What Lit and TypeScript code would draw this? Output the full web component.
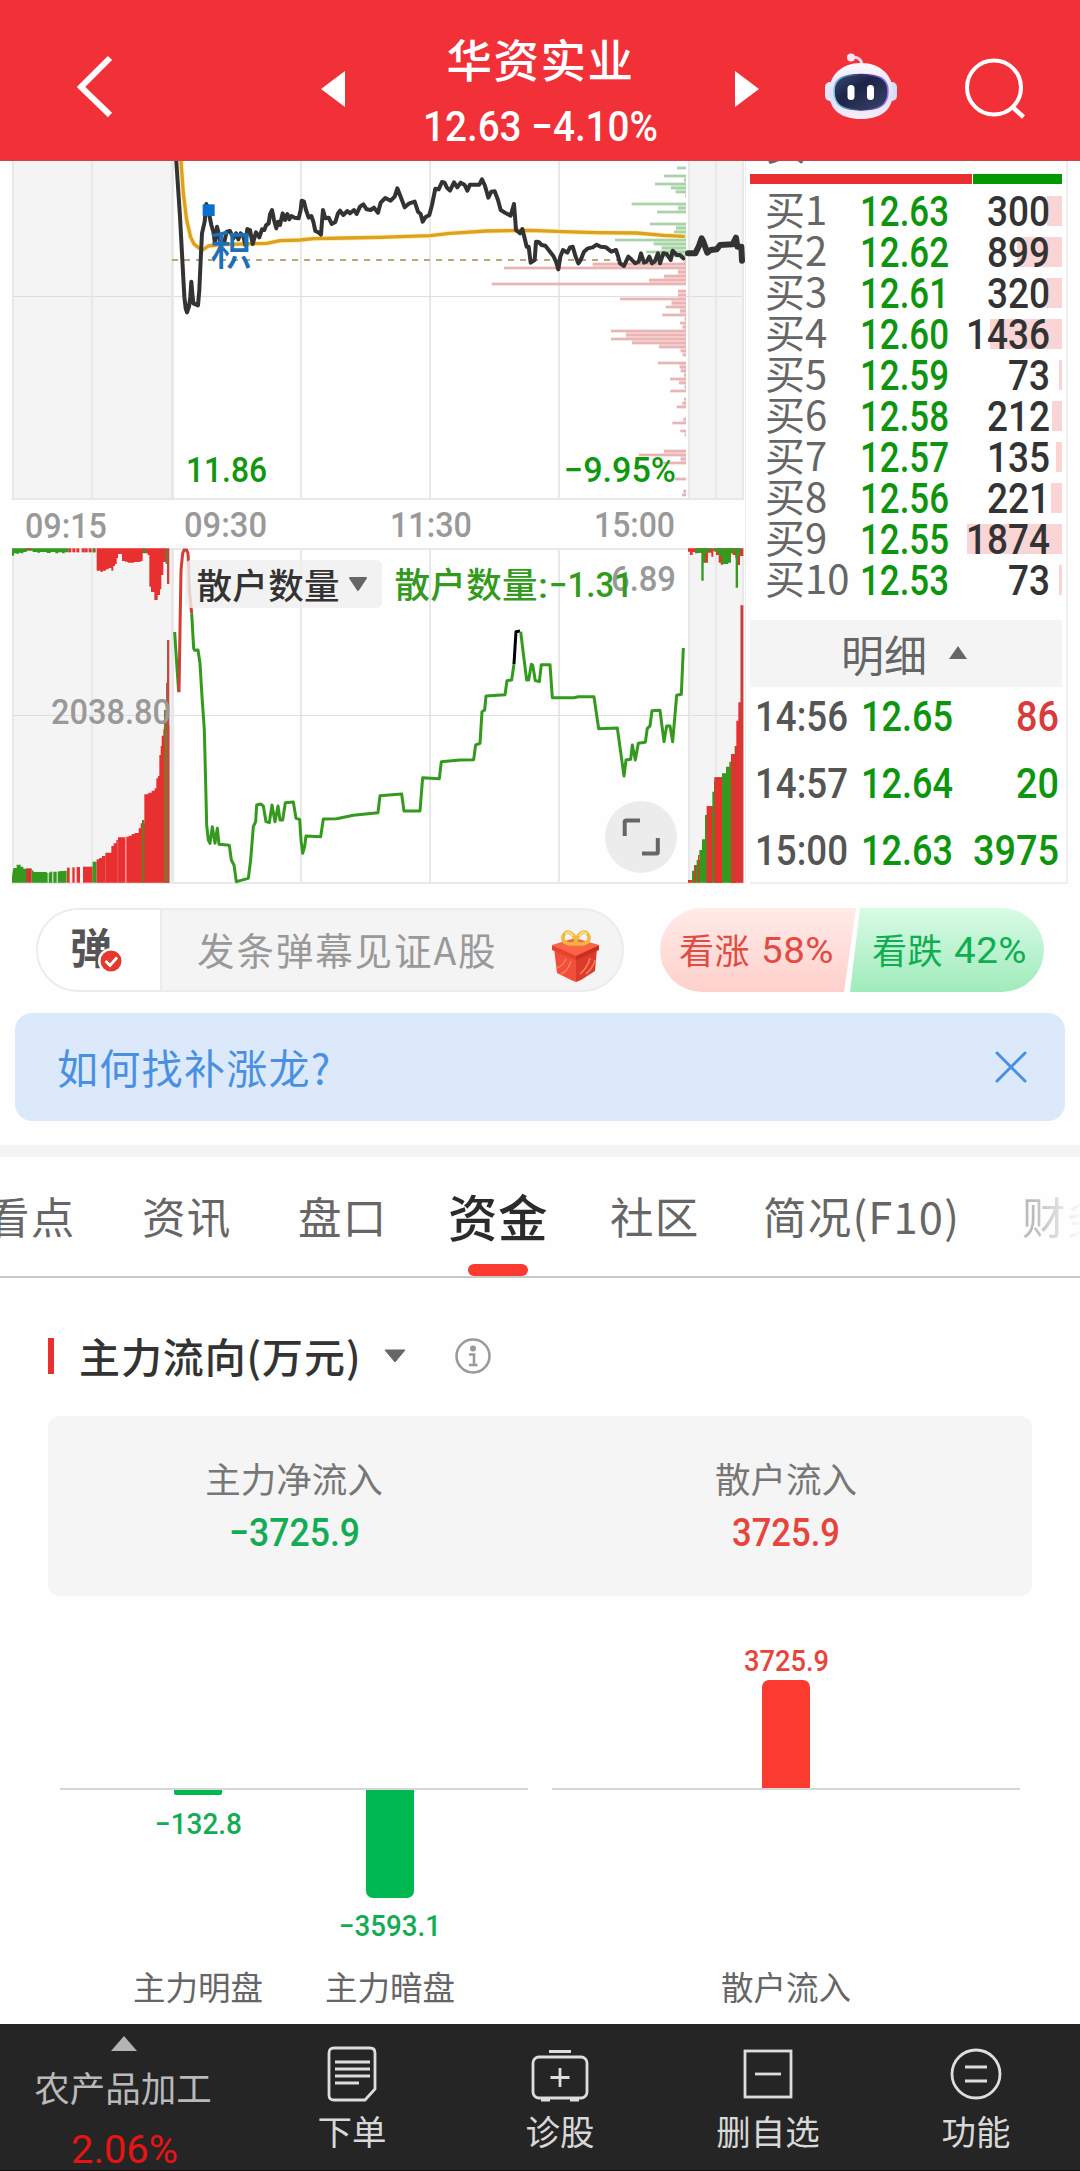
import { LitElement, html, svg, css } from "lit";
import { customElement } from "lit/decorators.js";

const CAP = 0.711;

/** Condensed numerals: the box is exactly as tall as the digits. */
const num = (text: string, w: number, cap: number, cls = "") => html`
  <svg class="num ${cls}" width=${w} height=${cap}>
    <text x="0" y=${cap} font-size=${cap / CAP} textLength=${w} lengthAdjust="spacingAndGlyphs">${text}</text>
  </svg>`;

/** Same numerals inside a chart. */
const label = (text: string, x: number, y: number, w: number, cap: number, fill: string) => svg`
  <text class="din" x=${x} y=${y} fill=${fill} font-size=${cap / CAP} textLength=${w}
    lengthAdjust="spacingAndGlyphs">${text}</text>`;

const bids: [string, string, number][] = [
  ["12.63", "300", 15], ["12.62", "899", 45], ["12.61", "320", 16], ["12.60", "1436", 72],
  ["12.59", "73", 3], ["12.58", "212", 10], ["12.57", "135", 6], ["12.56", "221", 11],
  ["12.55", "1874", 95], ["12.53", "73", 3],
];

const ticks: [string, string, string, string][] = [
  ["14:56", "12.65", "86", "r"], ["14:57", "12.64", "20", "g"], ["15:00", "12.63", "3975", "g"],
];

/* Price line, in thirds of a pixel. */
const price =
  "528,20 540,200 547,330 553,440 557,475 561,487 567,470 571,440 574,395 577,430 580,460 594,466 598,420 602,330 606,250 614,215 619,162 628,195 634,225 640,245 645,280 651,230 656,250 662,282 672,280 680,245 690,243 700,265 708,250 715,268 722,250 730,258 736,285 742,237 750,240 758,282 768,247 778,262 786,238 793,240 798,226 806,220 810,193 816,180 822,210 829,235 834,215 840,225 848,190 855,210 862,192 868,208 874,198 884,203 896,205 902,180 905,152 912,155 918,180 926,203 934,198 940,215 946,243 955,247 963,254 966,215 969,180 976,205 986,203 995,222 1006,216 1014,190 1020,182 1030,195 1042,183 1050,190 1062,180 1070,192 1080,170 1090,163 1100,178 1112,180 1122,173 1134,188 1142,158 1156,144 1172,152 1184,140 1192,115 1202,140 1214,172 1228,160 1244,155 1254,185 1262,192 1268,215 1276,202 1288,195 1296,165 1306,116 1316,118 1326,96 1334,98 1340,112 1350,122 1362,97 1372,112 1382,98 1394,105 1402,122 1410,104 1438,104 1446,88 1454,105 1460,125 1465,143 1474,125 1484,124 1494,150 1502,180 1518,190 1532,197 1542,162 1545,200 1548,240 1560,250 1567,237 1574,265 1580,290 1586,290 1592,338 1604,330 1608,275 1616,276 1625,285 1636,287 1650,305 1660,318 1668,335 1675,358 1681,320 1689,300 1702,308 1710,292 1718,290 1727,320 1735,340 1742,330 1752,305 1764,295 1778,292 1790,284 1802,290 1818,292 1834,305 1848,300 1854,318 1860,340 1872,348 1878,335 1885,320 1894,328 1906,340 1916,335 1923,310 1932,338 1940,335 1948,320 1956,340 1964,335 1974,310 1980,340 1990,310 2000,312 2012,330 2018,302 2030,315 2040,315 2050,325";
const after =
  "2064,310 2086,310 2096,290 2105,265 2110,275 2122,308 2132,300 2150,298 2160,285 2198,283 2208,263 2212,290 2224,290 2226,332";
const average =
  "542,20 550,130 560,210 572,262 582,282 594,292 608,300 625,288 660,284 800,280 840,272 900,270 940,266 1040,264 1140,262 1200,260 1290,257 1350,250 1460,243 1590,241 1690,245 1790,248 1910,249 1990,256 2050,259";

const supply: [number, number][] = [
  [54, 921], [78, 882], [90, 942], [102, 855], [114, 903], [126, 917], [138, 945], [162, 785], [174, 924],
  [186, 861], [222, 840], [234, 918], [246, 912], [258, 920], [270, 735], [282, 851], [294, 875],
  [306, 829], [318, 870],
];
const demand: [number, number][] = [
  [330, 940], [342, 668], [354, 402], [366, 924], [378, 882], [390, 837], [402, 365], [423, 924], [435, 924],
  [447, 750], [459, 905], [471, 887], [483, 930], [495, 877], [507, 944], [519, 930], [531, 938],
  [543, 723], [555, 768], [567, 723], [579, 786], [591, 867], [603, 932], [615, 938], [639, 864],
  [651, 929], [663, 932], [675, 942], [687, 900], [699, 927], [711, 944], [723, 901], [747, 942],
  [759, 937], [771, 920], [807, 940], [819, 907], [843, 931], [855, 944], [903, 882], [915, 807],
  [927, 932], [939, 880], [987, 915], [1023, 940], [1035, 936],
];
const profile = (rows: [number, number][], pale: string, fill: string) => rows.map(([y, x], i) => {
  const next = rows[i + 1];
  const gap = next && next[0] - y <= 12 ? Math.max(x, next[1]) : 948;
  return svg`
    <rect x=${gap} y=${y} width=${948 - gap} height="12" fill=${pale}></rect>
    <rect x=${x} y=${y - 4} width=${948 - x} height="8" fill=${fill}></rect>`;
});

const retailDown =
  "575,250 581,355 584,361 594,360 600,400 606,500 613,600 617,760 620,885 625,930 630,940 637,890 645,940 652,895 657,943 688,946 694,990 702,1005 709,1055 745,1045 752,990 760,890 767,875 770,825 782,822 790,828 798,875 808,878 816,825 825,875 834,828 840,870 848,870 856,818 880,816 888,865 899,868 903,930 908,970 914,950 918,918 962,920 970,867 1010,866 1060,856 1134,848 1140,797 1205,792 1212,843 1260,843 1268,743 1318,746 1324,695 1380,690 1421,689 1427,645 1440,640 1446,545 1454,540 1458,498 1515,494 1521,452 1535,450 1542,402";
const retailTail =
  "1562,305 1570,370 1580,450 1586,450 1594,403 1598,405 1606,452 1618,455 1624,404 1650,404 1657,503 1722,503 1735,500 1782,500 1796,596 1852,594 1872,738 1878,690 1892,688 1897,645 1906,690 1915,640 1936,637 1942,595 1950,588 1956,542 1980,541 1992,635 2000,588 2010,588 2018,635 2030,496 2044,493 2050,354";

const RED = "#e83030";
const GRN = "#339a1e";
const col = (x: number, y: number, w: number, h: number, f: string) =>
  svg`<rect x=${x} y=${y} width=${w} height=${h} fill=${f}></rect>`;

@customElement("quote-chart")
class QuoteChart extends LitElement {
  static styles = css`
    :host { display: block; }
    .plot { display: block; }
    .din { font-family: Roboto, sans-serif; font-weight: 500; }
    .cn { font-family: "Noto Sans CJK SC", sans-serif; }
  `;
  render() {
    return html`<svg class="plot" width="750" height="725" viewBox="0 161 750 725">
      <rect x="13" y="150" width="159" height="349" fill="#f4f4f4"></rect>
      <rect x="689" y="150" width="54" height="349" fill="#f4f4f4"></rect>
      <rect x="13" y="549" width="159" height="334" fill="#f4f4f4"></rect>
      <rect x="689" y="549" width="54" height="334" fill="#f4f4f4"></rect>
      <path stroke="#e8e8e8" stroke-width="2" fill="none" d="M13 150V499H743V150M92 150V499M301 150V499M430 150V499M559 150V499M689 150V499M716 150V499M13 549H743V883H13ZM92 549V883M301 549V883M430 549V883M559 549V883M689 549V883M716 549V883"></path>
      <path stroke="#dedede" fill="none" d="M13 296.5H743M13 715.5H743"></path>
      <path stroke="#e8e8e8" stroke-width="3" d="M172.500 150V499M172.500 549V883"></path>
      <path stroke="#eeeeee" d="M745.500 161V884"></path>
      <path stroke="#bba973" stroke-width="2" stroke-dasharray="6 6" d="M172 260H620"></path>
      <g transform="translate(370 150) scale(.33333)">
        ${profile(supply, "#d5f2d5", "#a9d2a7")}${profile(demand, "#fcd6d6", "#e8b4b4")}
      </g>
      <g transform="translate(0 150) scale(.33333)" fill="none" stroke-linejoin="round" stroke-linecap="round">
        <polyline points=${average} stroke="#fdf0a8" stroke-width="15"></polyline>
        <polyline points=${average} stroke="#dda021" stroke-width="10"></polyline>
        <polyline points=${price} stroke="#333" stroke-width="12"></polyline>
        <polyline points=${after} stroke="#333" stroke-width="18"></polyline>
        <rect x="608" y="163" width="36" height="35" fill="#0b6fce"></rect>
      </g>
      <text class="cn" x="210.500" y="264.500" font-size="41" font-weight="500" fill="#1b70b9">积</text>
      ${label("11.86", 186, 482, 81, 25, "#0d980d")}
      ${label("−9.95%", 564, 482, 112, 25, "#0d980d")}
      ${label("09:15", 25, 538, 82, 25, "#999")}
      ${label("09:30", 184, 537, 83, 25, "#999")}
      ${label("11:30", 390, 537, 82, 25, "#999")}
      ${label("15:00", 594, 537, 81, 25, "#999")}
      <g transform="translate(0 530) scale(.33333)">
        <path fill=${GRN} d="M36 55V77H42V70H50V72H56V68H62V70H70V66H80V62H98V66H112V68H120V66H140V69H152V66H166V70H175V67H186V70H194V67H205V55Z"></path>
        ${[205, 217, 229, 245, 254, 266, 278].map((x) => col(x, 55, 9, 12, RED))}
        <path fill=${RED} d="M290 55V122H302V126H308V122H318V118H326V114H334V122H340V108H345V102H350V85H354V72H366V93H375V95H383V98H397V98H402V96H422V93H428V70H443V75H448V170H453V186H463V210H473V195H480V178H484V135H490V96H498V55Z"></path>
        ${col(80, 55, 14, 5, RED)}${col(278, 55, 6, 12, GRN)}
        ${col(428, 55, 9, 13, GRN)}${col(497, 55, 6, 47, GRN)}${col(501, 55, 7, 107, "#d04040")}
        <path fill=${GRN} d="M36 1058V1040L40 1014H50V1004H62V1010H70V1016H78V1058ZM95 1058V1018L102 1026H140V1028H150V1025H175V1024L200 1022V1058Z"></path>
        ${col(78, 1015, 17, 43, "#c93a2c")}
        ${[201, 217, 230, 249].map((x, i) => col(x, 1013 - i, [8, 11, 10, 29][i], 45 + i, RED))}
        ${[143, 157, 170].map((x) => col(x, 1024, 3, 34, "#f4f4f4"))}
        ${col(278, 995, 12, 63, GRN)}
        <path fill=${RED} d="M290 1058V988H298V984H306V978H316V968H334V948H341V940H349V930H354V922H376V920H386V917H395V912H404V909H416V895H422V880H433V793H445V788H455V782H464V775H469V745H474V738H478V675H482V648H485V617H490V597H495V585H508V1058Z"></path>
        ${[212, 224].map((x) => col(x, 1010, 4, 48, "#fbeaea"))}${col(376, 918, 3, 140, "#fbd0d0")}
        ${col(316, 968, 1.500, 90, "#f08080")}${col(353, 930, 1.500, 128, "#f08080")}
        ${col(426, 870, 7, 188, "#6a7a22")}${col(492, 540, 11, 518, "#847020")}${col(498, 458, 5, 600, "#7a7a3a")}
        ${col(501, 330, 7, 728, "#cc4444")}
        <g fill="none" stroke-width="9" stroke-linejoin="round">
          <polyline points="524,306 530,400 536,485" stroke=${GRN}></polyline>
          <polyline points="537,487 540,300 543,120 548,70 552,60 560,60 564,70 566,110 568,180 575,250" stroke="#d53c34"></polyline>
          <polyline points=${retailDown} stroke=${GRN}></polyline>
          <polyline points="1542,402 1548,305 1560,303" stroke="#000"></polyline>
          <polyline points=${retailTail} stroke=${GRN}></polyline>
        </g>
      </g>
      <g transform="translate(370 530) scale(.33333)">
        <path fill=${RED} d="M954 55V65H960V75H968V66H975V70H985V68H1002V98H1014V68H1024V80H1030V62H1038V75H1046V98H1052V104H1060V70H1088V75H1096V85H1104V105H1110V78H1120V55Z"></path>
        <path fill=${GRN} d="M975 55V68H994V152H1001V98H1006V70H1012V62H1022V55ZM1032 55V65H1044V75H1054V102H1075V98H1083V70H1090V62H1097V173H1104V75H1112V55Z"></path>
        <path fill=${GRN} d="M966 1058V1022H972V1005H980V990H988V960H996V928H1005V855H1012V828H1027V785H1033V742H1056V730H1068V710H1078V695H1083V672H1098V1058Z"></path>
        <path fill=${RED} d="M954 1058V1050H966V1058ZM972 1058V1008H977V1058ZM984 1058V975H988V1058ZM1010 1058V828H1027V1058ZM1034 1058V742H1056V1058ZM1083 1058V672H1094V648H1099V572H1105V517H1112V226H1120V1058Z"></path>
        ${col(1032, 755, 3, 303, "#8a6020")}${col(1095, 648, 3, 410, "#9a5528")}${col(1112, 226, 4, 832, "#b84a40")}
      </g>
      ${label("2038.80", 51, 724, 120, 25, "#999")}
      <rect x="185" y="560" width="197" height="48" rx="6" fill="#efefef" fill-opacity=".82"></rect>
      <text class="cn" x="196.500" y="599" font-size="35.500" font-weight="500" fill="#333" textLength="143">散户数量</text>
      <path d="M350 578H366L358 590Z" fill="#666" stroke="#666" stroke-width="2" stroke-linejoin="round"></path>
      ${label("6.89", 611, 591, 65, 25, "#999")}
      <text class="cn" x="394.500" y="598" font-size="35.500" font-weight="500" fill=${GRN} textLength="143">散户数量</text>
      ${label(":", 538, 598, 10, 25, GRN)}
      ${label("−1.31", 549, 597, 84, 25, GRN)}
      <circle cx="641" cy="837" r="36" fill="#ececec"></circle>
      <path d="M624.700 836V822Q624.700 820.500 626.200 820.500H640M642 853.500H656.500Q657.800 853.500 657.800 852V838" fill="none" stroke="#666" stroke-width="4"></path>
    </svg>`;
  }
}

@customElement("app-root")
class AppRoot extends LitElement {
  static styles = css`
    :host { display: block; width: 1080px; height: 2171px; overflow: hidden; background: #fefefe;
      font-family: "Noto Sans CJK SC", sans-serif; color: #333; }
    * { box-sizing: border-box; }
    svg { display: block; overflow: visible; flex: none; }
    .num { font-family: Roboto, sans-serif; font-weight: 500; fill: currentColor; }
    .reg { font-weight: 400; }
    .r { color: #d93a3a; } .g { color: #0d960d; }
    .page { display: flex; flex-direction: column; height: 2171px; }

    .head { height: 161px; background: #f23038; border-bottom: 1px solid #c9454c; color: #fff; flex: none;
      display: grid; grid-template-columns: 321px 104px 233px 77px 89px 142px 1fr; }
    .head > * { align-self: start; }
    .back { margin: 54px 0 0 76px; }
    .tri { margin-top: 71px; }
    .next { margin-left: 77px; }
    .quote { display: flex; flex-direction: column; align-items: center; }
    .name { font-size: 45.500px; font-weight: 500; line-height: 60px; letter-spacing: 1.500px; margin: 28px 2px 0 0; white-space: nowrap; }
    .quote .num { margin-top: 23px; margin-left: -2px; }
    .bot { margin-top: 52px; }
    .find { margin-top: 56px; }

    .market { display: flex; height: 725px; flex: none; overflow: hidden; }
    .book { width: 318px; height: 723px; border-right: 2px solid #eee; border-bottom: 2px solid #eee; padding-right: 4px; overflow: hidden; }
    .peek { height: 13px; overflow: hidden; display: flex; align-items: flex-start; }
    .peek span { font-size: 40px; line-height: 40px; margin: -38px 0 0 16px; color: #666; }
    .ratio { display: flex; height: 10px; margin-bottom: 6px; }
    .ratio i:first-child { width: 222px; background: #e83030; }
    .ratio i:last-child { flex: 1; background: #009a00; margin-left: 1px; }
    .bid { height: 41px; display: grid; grid-template-columns: 109px 90px 1fr; align-items: center; padding-left: 16px; }
    .lv { font-size: 40px; line-height: 41px; color: #666; margin: -4px -30px 0 -1px; }
    .bid .num { margin-left: -15px; }
    .vol { display: flex; justify-content: flex-end; align-items: center; position: relative; height: 30px; padding-right: 12px; color: #333; margin-left: -10px; }
    .vol .num { position: relative; margin: 0; }
    .depth { position: absolute; right: 0; top: 0; height: 30px; background: #fad5d6; }
    .detail { height: 67px; background: #f4f4f4; margin-top: 20px; display: flex; align-items: center; padding-left: 91px; color: #666; font-size: 43px; line-height: 60px; gap: 22px; }
    .detail span { margin-top: -2px; }
    .detail svg { margin-top: -2px; }
    .tick { height: 67px; display: grid; grid-template-columns: 106px 90px 1fr; align-items: center; padding: 0 3px 0 5px; color: #555; }
    .tick .num:last-child { justify-self: end; }
    .ticks { margin-top: -5px; }

    .social { height: 84px; margin: 22px 36px 0; display: flex; flex: none; }
    .danmu { width: 588px; border: 2px solid #ececec; border-radius: 42px; background: #f4f4f4; display: flex; align-items: center; overflow: hidden; }
    .dan { width: 124px; height: 100%; background: #fff; border-right: 2px solid #ececec; display: flex; align-items: center; padding-left: 32px; }
    .dan span { font-size: 42px; font-weight: 700; line-height: 50px; color: #555; margin-top: -9px; }
    .badge { margin: 21px 0 0 -14px; }
    .hint { font-size: 37.500px; line-height: 50px; letter-spacing: 1.900px; color: #999; margin: -2px 0 0 35px; white-space: nowrap; width: 354px; }
    .gift { margin-top: 12px; }
    .vote { margin-left: 36px; display: flex; width: 384px; height: 84px; }
    .up, .down { display: flex; align-items: center; font-size: 35px; line-height: 48px; letter-spacing: .5px; }
    .up span, .down span { margin-top: -3px; }
    .up { width: 196px; border-radius: 42px 0 0 42px; background: linear-gradient(#ffebe9, #ffd0cb); clip-path: polygon(0 0, 100% 0, 184px 100%, 0 100%); color: #e24b41; padding-left: 19px; gap: 11px; }
    .down { width: 196px; margin-left: -8px; border-radius: 0 42px 42px 0; background: linear-gradient(#d9fbe6, #9febbb); clip-path: polygon(12px 0, 100% 0, 100% 100%, 2px 100%); color: #0fae50; padding-left: 24px; gap: 11px; }

    .tip { margin: 21px 15px 0; height: 108px; border-radius: 17px; background: #dbe9fb; color: #4a90e2; display: flex; align-items: center; justify-content: space-between; padding: 0 39px 0 42px; font-size: 41px; letter-spacing: 1.300px; flex: none; }
    .tip span { margin-top: -3px; }
    .band { height: 12px; margin-top: 24px; background: #f4f4f4; flex: none; }

    .tabs { height: 121px; border-bottom: 2px solid #c9c9c9; position: relative; display: grid; overflow: hidden; flex: none;
      grid-template-columns: 156px 156px 150px 162px 153px 259px 1fr; margin-left: -14px; }
    .tab { font-size: 43.500px; letter-spacing: 1.200px; line-height: 60px; margin-top: 29px; color: #666; white-space: nowrap; }
    .tab.on { font-size: 49.500px; font-weight: 500; color: #2b2b2b; letter-spacing: .5px; }
    .fade { background: linear-gradient(90deg, #bbb 10px, #fff 62px); -webkit-background-clip: text; background-clip: text; color: transparent; }
    .mark { position: absolute; left: 482px; bottom: 0; width: 60px; height: 12px; border-radius: 6px; background: #fb3b30; }

    .title { margin: 60px 48px 0; display: flex; align-items: center; height: 36px; flex: none; }
    .title i { width: 6px; height: 36px; background: #e83030; }
    .title span { font-size: 41px; font-weight: 500; line-height: 50px; letter-spacing: .9px; margin: -2px 0 0 25px; width: 305px; white-space: nowrap; }
    .title .info { margin-left: 49px; }
    .card { margin: 42px 48px 0; height: 180px; border-radius: 12px; background: #f5f5f5; display: flex; padding-top: 37px; flex: none; }
    .sum { width: 492px; display: flex; flex-direction: column; align-items: center; font-size: 35.500px; line-height: 50px; color: #777; }
    .sum .num { margin-top: 15px; }
    .green { color: #12ac54; } .red { color: #e8443b; }

    .flow { display: grid; grid-template-columns: 468px 468px; column-gap: 24px; margin: 0 60px; height: 427px; flex: none; }
    .side { display: grid; grid-template-rows: 194px 1fr 60px; }
    .left { grid-template-columns: 192px 192px; padding: 0 42px; }
    .axis { grid-column: 1 / -1; margin: 0 -42px; border-bottom: 2px solid #d4d7d6; }
    .above { display: flex; flex-direction: column; align-items: center; justify-content: flex-end; gap: 9px; border-bottom: 2px solid #d4d7d6; }
    .below { display: flex; flex-direction: column; align-items: center; }
    .neg { width: 48px; background: #00b852; border-radius: 0 0 7px 7px; }
    .flat { border-radius: 0 0 2px 2px; margin-bottom: 1px; }
    .pos { width: 48px; background: #fb3b30; border-radius: 7px 7px 0 0; }
    .below .num { margin-top: 17px; }
    .cat { font-size: 32.500px; line-height: 46px; color: #666; text-align: center; }

    .nav { margin-top: auto; height: 147px; background: #252525; color: #d8d8d8; display: grid; grid-template-columns: 248px repeat(4, 208px); flex: none; border-bottom: 1px solid #111; }
    .item { display: flex; flex-direction: column; align-items: center; font-size: 34.500px; line-height: 48px; padding-top: 22px; }
    .item span { margin-top: 4px; }
    .sector { display: flex; flex-direction: column; align-items: center; color: #b9b9b9; font-size: 35.500px; line-height: 48px; padding-top: 12px; }
    .sector span { margin: 12px 2px 0 0; }
    .sector .num { margin-top: 24px; color: #e81414; }
  `;

  render() {
    return html`<div class="page">
      <header class="head">
        <svg class="back" width="38" height="64"><path d="M34 4L5 33L34 61" fill="none" stroke="#fff" stroke-width="6"></path></svg>
        <svg class="tri" width="24" height="36"><path d="M24 0V36L0 18Z" fill="#fff"></path></svg>
        <div class="quote"><div class="name">华资实业</div>${num("12.63 −4.10%", 235, 30)}</div>
        <svg class="tri next" width="24" height="36"><path d="M0 0V36L24 18Z" fill="#fff"></path></svg>
        <span></span>
        <svg class="bot" width="74" height="68">
          <defs>
            <linearGradient id="hd" x1="0" y1="0" x2="0" y2="1"><stop offset="0" stop-color="#fdf8ff"></stop><stop offset=".6" stop-color="#e0def8"></stop><stop offset="1" stop-color="#f8eefa"></stop></linearGradient>
            <linearGradient id="rim" x1="0" y1="0" x2="1" y2="0"><stop offset="0" stop-color="#6fd0f0"></stop><stop offset=".5" stop-color="#3a2f70"></stop><stop offset="1" stop-color="#9a6cf0"></stop></linearGradient>
            <linearGradient id="fc" x1="0" y1="0" x2="1" y2="1"><stop offset="0" stop-color="#3c486c"></stop><stop offset=".4" stop-color="#1c2547"></stop><stop offset="1" stop-color="#3a4468"></stop></linearGradient>
          </defs>
          <path d="M27 6C33 4 38 7 38 14" fill="none" stroke="#f3dcea" stroke-width="3"></path>
          <circle cx="27" cy="5.500" r="4" fill="#f8e6f0"></circle>
          <rect x="1" y="30" width="10" height="19" rx="5" fill="#e6e6fb"></rect>
          <rect x="63" y="30" width="10" height="19" rx="5" fill="#d6dcfa"></rect>
          <path d="M37 11C57 11 69 24 69 40C69 58 57 67 37 67C17 67 5 58 5 40C5 24 17 11 37 11Z" fill="url(#hd)"></path>
          <path d="M37 22.500C56 22.500 64 27 64 39C64 53 56 58 37 58C18 58 10 53 10 39C10 27 18 22.500 37 22.500Z" fill="url(#fc)" stroke="url(#rim)" stroke-width="1.500"></path>
          <rect x="23.500" y="33" width="7" height="15" rx="3.500" fill="#fff"></rect>
          <rect x="43" y="33" width="7" height="15" rx="3.500" fill="#fff"></rect>
        </svg>
        <svg class="find" width="62" height="62"><circle cx="28" cy="31.500" r="27" fill="none" stroke="#fff" stroke-width="4"></circle><path d="M46.500 51L57.500 61" stroke="#fff" stroke-width="4.500"></path></svg>
      </header>

      <section class="market">
        <quote-chart></quote-chart>
        <div class="book">
          <div class="peek"><span>买</span></div>
          <div class="ratio"><i></i><i></i></div>
          ${bids.map(([p, v, d], i) => html`<div class="bid">
            <span class="lv">买${i + 1}</span>
            <span class="g">${num(p, 89, 30)}</span>
            <div class="vol"><i class="depth" style="width:${d}px"></i>${num(v, v.length * 21, 30)}</div>
          </div>`)}
          <div class="detail"><span>明细</span><svg width="18" height="13"><path d="M0 13H18L9 0Z" fill="#666"></path></svg></div>
          <div class="ticks">${ticks.map(([t, p, v, c]) => html`<div class="tick">
            ${num(t, 93, 30)}${num(p, 92, 30, "g")}${num(v, v.length * 21.500, 30, c)}
          </div>`)}</div>
        </div>
      </section>

      <section class="social">
        <div class="danmu">
          <div class="dan"><span>弹</span>
            <svg class="badge" width="26" height="26"><circle cx="13" cy="13" r="13" fill="#fff"></circle><circle cx="13" cy="13" r="10.500" fill="#e5382e"></circle><path d="M7.500 13L12 17.500L19 9.500" fill="none" stroke="#fff" stroke-width="2.800"></path></svg>
          </div>
          <div class="hint">发条弹幕见证A股</div>
          <svg class="gift" width="50" height="54">
            <path d="M3 19L25 29V53L20 51L6 44Z" fill="#f0503a"></path>
            <path d="M46 19L25 29V53L30 51L44 42Z" fill="#dc3a2a"></path>
            <path d="M1 16L25 26V31L1 21Z" fill="#e8402e"></path>
            <path d="M48 16L25 26V31L48 21Z" fill="#cf2c20"></path>
            <path d="M1 16L24 9L48 16L25 27Z" fill="#fb6447"></path>
            <path d="M20 32Q17 42 10 45M15 30Q12 37 6 39M39 29Q37 38 29 45M44 31Q42 39 35 45" fill="none" stroke="#fb7d5e" stroke-width="1.500"></path>
            <path d="M25 14C17 17 11 13 12 8C14 0 22 2 25 12C28 2 36 0 38 8C39 13 33 17 25 14Z" fill="none" stroke="#f0b83c" stroke-width="3.500"></path>
            <path d="M14 5C17 2 20 3 22 7M36 5C33 2 30 3 28 7" fill="none" stroke="#ffe48a" stroke-width="1.500"></path>
          </svg>
        </div>
        <div class="vote">
          <div class="up"><span>看涨</span>${num("58%", 73, 26, "reg")}</div>
          <div class="down"><span>看跌</span>${num("42%", 73, 26, "reg")}</div>
        </div>
      </section>

      <section class="tip"><span>如何找补涨龙?</span>
        <svg width="30" height="30"><path d="M1 1L29 29M29 1L1 29" stroke="#4a90e2" stroke-width="3" stroke-linecap="round"></path></svg>
      </section>
      <div class="band"></div>

      <nav class="tabs">
        <div class="tab">看点</div><div class="tab">资讯</div><div class="tab">盘口</div>
        <div class="tab on">资金</div><div class="tab">社区</div><div class="tab">简况(F10)</div>
        <div class="tab fade">财务</div>
        <i class="mark"></i>
      </nav>

      <section class="title"><i></i><span>主力流向(万元)</span>
        <svg width="22" height="14"><path d="M1 1H21L11 13Z" fill="#666" stroke="#666" stroke-linejoin="round"></path></svg>
        <svg class="info" width="36" height="36"><circle cx="18" cy="18" r="16.500" fill="none" stroke="#999" stroke-width="2.500"></circle><circle cx="18" cy="10.500" r="3" fill="#999"></circle><path d="M14 16.500H19V27M14 27H22.500" fill="none" stroke="#999" stroke-width="2.500"></path></svg>
      </section>

      <section class="card">
        <div class="sum"><span>主力净流入</span>${num("−3725.9", 131, 28, "green")}</div>
        <div class="sum"><span>散户流入</span>${num("3725.9", 108, 28, "red")}</div>
      </section>

      <section class="flow">
        <div class="side left">
          <div class="axis"></div>
          <div class="below">
            <i class="neg flat" style="height:5px"></i>${num("−132.8", 87, 21, "green")}
          </div>
          <div class="below">
            <i class="neg" style="height:108px"></i>${num("−3593.1", 102, 21, "green")}
          </div>
          <div class="cat">主力明盘</div><div class="cat">主力暗盘</div>
        </div>
        <div class="side right">
          <div class="above">${num("3725.9", 85, 21, "red")}<i class="pos" style="height:108px"></i></div>
          <div></div>
          <div class="cat">散户流入</div>
        </div>
      </section>

      <footer class="nav">
        <div class="sector">
          <svg width="26" height="15"><path d="M0 15H26L13 0Z" fill="#b4b4b4"></path></svg>
          <span>农产品加工</span>${num("2.06%", 107, 28, "reg")}
        </div>
        <div class="item">
          <svg width="50" height="56" fill="none" stroke="#ddd" stroke-width="2.800"><path d="M7 2H43Q48 2 48 7V43L38 54H7Q2 54 2 49V7Q2 2 7 2Z"></path><path d="M8 16H43M8 23H43M8 30H43M8 37H32"></path></svg>
          <span>下单</span></div>
        <div class="item">
          <svg width="58" height="56" fill="none" stroke="#ddd" stroke-width="2.800"><rect x="2" y="11" width="54" height="41" rx="6"></rect><path d="M18 5.500H40M29 22V41M19.500 31.500H38.500M10 54H19M39 54H48"></path></svg>
          <span>诊股</span></div>
        <div class="item">
          <svg width="50" height="56" fill="none" stroke="#ddd" stroke-width="2.800"><rect x="2" y="5" width="46" height="46"></rect><path d="M12 28H38"></path></svg>
          <span>删自选</span></div>
        <div class="item">
          <svg width="52" height="56" fill="none" stroke="#ddd" stroke-width="2.800"><circle cx="26" cy="28" r="24"></circle><path d="M15 21H37M15 35H37"></path></svg>
          <span>功能</span></div>
      </footer>
    </div>`;
  }
}
